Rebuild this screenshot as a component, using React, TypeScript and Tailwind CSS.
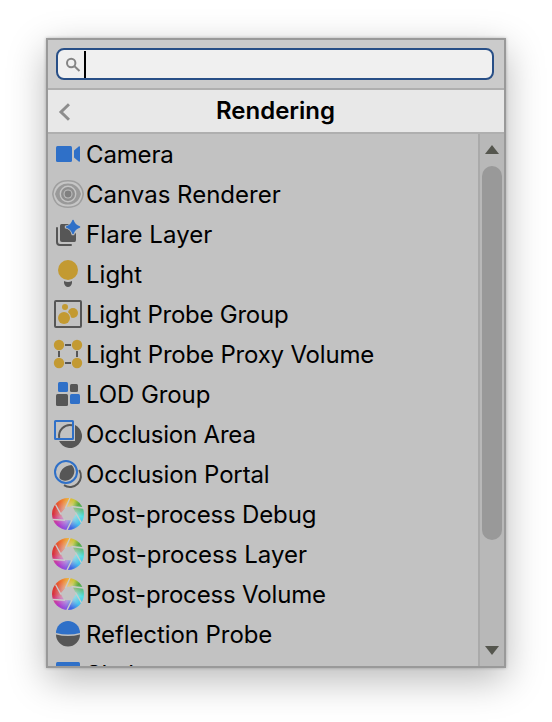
import type { ReactNode } from 'react';

const BLUE = '#2f70c8';
const GRAY = '#565656';
const GOLD = '#c39a32';

function Svg({ children }: { children: ReactNode }) {
  return (
    <svg viewBox="0 0 32 32" width="32" height="32" className="block shrink-0" fill="none">
      {children}
    </svg>
  );
}

const Camera = () => (
  <Svg>
    <rect x="4" y="8" width="16" height="16" rx="1.5" fill={BLUE} />
    <path d="M22 12.5 L27 8.2 Q28 8 28 9 V23 Q28 24 27 23.8 L22 19.5 Z" fill={BLUE} />
  </Svg>
);

const CanvasRenderer = () => (
  <Svg>
    <path d="M0.8 16 C2 7 8 2.8 16 2.8 C24 2.8 30 7 31.2 16 C30 25 24 29.2 16 29.2 C8 29.2 2 25 0.8 16 Z" fill="#c6c6c6" stroke="#9f9f9f" strokeWidth="1.6" />
    <path d="M3 16 C5 8.500 10 5.4 16 5.4 C22 5.4 27 8.500 29 16 C27 23.500 22 26.6 16 26.6 C10 26.6 5 23.500 3 16 Z" fill="#999999" />
    <circle cx="16" cy="16" r="8.4" fill="#c4c4c4" />
    <circle cx="16" cy="16" r="7" fill="#8e8e8e" />
    <circle cx="16" cy="16" r="4.5" fill="#bdbdbd" />
    <circle cx="16" cy="16" r="3.4" fill="#808080" />
  </Svg>
);

const FlareLayer = () => (
  <Svg>
    <path d="M5 10 V24 Q5 27 8 27 H19" stroke={GRAY} strokeWidth="2" strokeLinecap="round" />
    <path d="M9.5 6 H17 L24 16 V22 Q24 24 22.5 24 H10 Q8 24 8 22 V7.5 Q8 6 9.5 6 Z" fill={GRAY} />
    <path d="M21 1 Q22 8 29 9 Q22 10 21 17 Q20 10 13 9 Q20 8 21 1 Z" fill={BLUE} stroke="#c2c2c2" strokeWidth="2.5" />
    <path d="M21 2.5 Q22.5 7.5 27.5 9 Q22.5 10.5 21 15.5 Q19.5 10.5 14.5 9 Q19.5 7.5 21 2.5 Z" fill={BLUE} stroke={BLUE} strokeWidth="1.5" strokeLinejoin="round" />
  </Svg>
);

const Light = () => (
  <Svg>
    <circle cx="16" cy="12" r="10" fill={GOLD} />
    <path d="M12 23 Q16 25 20 23 V25 Q19 29 16 29 Q13 29 12 25 Z" fill={GRAY} />
  </Svg>
);

const LightProbeGroup = () => (
  <Svg>
    <rect x="3" y="3" width="26" height="26" rx="1" stroke={GRAY} strokeWidth="2" />
    <circle cx="21" cy="15" r="5" fill={GOLD} />
    <circle cx="12" cy="20" r="7" fill="#c2c2c2" />
    <circle cx="12" cy="20" r="6" fill={GOLD} />
    <circle cx="13" cy="9" r="3" fill={GOLD} />
  </Svg>
);

const LightProbeVolume = () => (
  <Svg>
    <path d="M13 7 H19 M13 25 H19 M7 13 V19 M25 13 V19" stroke={GRAY} strokeWidth="2" />
    <circle cx="7" cy="7" r="5.2" fill={GOLD} />
    <circle cx="25" cy="7" r="5.2" fill={GOLD} />
    <circle cx="7" cy="25" r="5.2" fill={GOLD} />
    <circle cx="25" cy="25" r="5.2" fill={GOLD} />
  </Svg>
);

const LodGroup = () => (
  <Svg>
    <rect x="6" y="4" width="10" height="10" rx="1.5" fill={BLUE} />
    <rect x="18" y="6" width="8" height="8" rx="1.5" fill={GRAY} />
    <rect x="4" y="16" width="12" height="12" rx="1.5" fill={GRAY} />
    <rect x="18" y="16" width="10" height="10" rx="1.5" fill={BLUE} />
  </Svg>
);

const OcclusionArea = () => (
  <Svg>
    <path d="M23 7.1 A12 12 0 1 1 7.1 23 H23 Z" fill={GRAY} />
    <path d="M7.2 20 A11 11 0 0 1 20 7.2" stroke={GRAY} strokeWidth="2" />
    <rect x="3" y="3" width="18" height="18" rx="0.5" stroke={BLUE} strokeWidth="2" />
  </Svg>
);

const OcclusionPortal = () => (
  <Svg>
    <path d="M27.2 12 A11 11 0 0 1 12 27.2" stroke={GRAY} strokeWidth="2" />
    <path d="M19.5 7 C24 11 22.5 17 19.5 20 C16 23.5 10 23.5 7.5 20 C7 13 12 7.5 19.5 7 Z" fill={GRAY} />
    <circle cx="14" cy="14" r="11" stroke={BLUE} strokeWidth="2" />
  </Svg>
);

const Aperture = () => (
  <div className="relative size-8 shrink-0">
    <div className="size-8 rounded-full bg-[conic-gradient(from_0deg,#eeb03c,#c7c83c_25deg,#57a73c_48deg,#5cc08a_75deg,#4fdfe4_100deg,#45c0ee_135deg,#3f62e4_168deg,#8d55de_190deg,#b338c8_220deg,#cf3f90_245deg,#d8343f_270deg,#dd4030_300deg,#ee7030_330deg,#eeb03c)]" />
    <svg viewBox="0 0 32 32" className="absolute inset-0 size-8">
      <defs>
        <radialGradient id="fade">
          <stop offset="45%" stopColor="#dedede" stopOpacity="0.5" />
          <stop offset="90%" stopColor="#dedede" stopOpacity="0" />
        </radialGradient>
      </defs>
      <circle cx="16" cy="16" r="16" fill="url(#fade)" />
      <path d="M14 9 L20.5 8.5 L24 15.5 L20 22.5 L12 22 L8.5 15.5 Z" fill="#c4c4c4" />
      <path d="M13.5 10 L18 0 M19.5 8.5 L31.5 10 M23.5 14.5 L29.5 25 M20 22 L15 32 M13 22.2 L1 21.5 M9 16.5 L3.5 6.5" stroke="#cbcbcb" strokeWidth="1.4" />
    </svg>
  </div>
);

const ReflectionProbe = () => (
  <Svg>
    <path d="M4 15 A12 12 0 0 1 28 15 Q16 18 4 15 Z" fill={BLUE} />
    <path d="M4 16.4 Q16 19.4 28 16.4 A12 12 0 0 1 4 16.4 Z" fill={GRAY} />
  </Svg>
);

const Skybox = () => (
  <Svg>
    <rect x="4" y="4" width="24" height="24" rx="1.5" fill={BLUE} />
  </Svg>
);

const items: [string, () => ReactNode, string][] = [
  ['Camera', Camera, 'tracking-[-0.15px]'],
  ['Canvas Renderer', CanvasRenderer, 'tracking-normal'],
  ['Flare Layer', FlareLayer, 'tracking-[0.08px]'],
  ['Light', Light, 'tracking-normal'],
  ['Light Probe Group', LightProbeGroup, 'tracking-[-0.24px]'],
  ['Light Probe Proxy Volume', LightProbeVolume, 'tracking-[-0.19px]'],
  ['LOD Group', LodGroup, 'tracking-[-0.1px]'],
  ['Occlusion Area', OcclusionArea, 'tracking-[-0.2px]'],
  ['Occlusion Portal', OcclusionPortal, 'tracking-[-0.15px]'],
  ['Post-process Debug', Aperture, 'tracking-[-0.16px]'],
  ['Post-process Layer', Aperture, 'tracking-normal'],
  ['Post-process Volume', Aperture, 'tracking-[-0.16px]'],
  ['Reflection Probe', ReflectionProbe, 'tracking-[-0.08px]'],
  ['Skybox', Skybox, 'tracking-normal'],
];

export default function App() {
  return (
    <div className="h-[722px] w-[552px] overflow-hidden bg-white pt-[38px] pl-[46px] font-[Inter,sans-serif] text-black">
      <div className="flex h-[630px] w-[460px] flex-col border-2 border-[#999999] bg-[#c2c2c2] shadow-[0_12px_36px_rgba(0,0,0,0.28),0_0_3px_rgba(0,0,0,0.25)]">
        <div className="flex h-[50px] shrink-0 border-b-2 border-[#afafaf] bg-[#cbcbcb] px-2 pt-2">
          <div className="flex h-8 w-[438px] items-center rounded-lg border-2 border-[#284f87] bg-[#f0f0f0] pl-2">
            <svg viewBox="0 0 16 16" width="16" height="16" fill="none" stroke="#858585" strokeWidth="2" className="mt-px">
              <circle cx="5.2" cy="6" r="4.2" />
              <path d="M8.5 9.2 L13.5 14" />
            </svg>
            <div className="ml-0.5 h-[27px] w-0.5 bg-black" />
          </div>
        </div>
        <div className="flex h-11 shrink-0 items-center border-b-2 border-[#afafaf] bg-[#e8e8e8] pl-2.5">
          <svg viewBox="0 0 12 18" width="12" height="18" fill="none" stroke="#8d8d8d" strokeWidth="3" className="mt-0.5 shrink-0">
            <path d="M11 1.2 L3 9 L11 16.8" />
          </svg>
          <h1 className="flex-1 pr-[23px] text-center text-[24px] leading-[42px] font-semibold">Rendering</h1>
        </div>
        <div className="flex min-h-0 flex-1">
          <ul className="flex-1 overflow-hidden bg-[#c2c2c2]">
            {items.map(([label, Icon, tracking]) => (
              <li key={label} className="flex h-10 items-center gap-0.5 pl-1">
                <Icon />
                <span className={`pt-0.5 text-[24px] leading-10 whitespace-nowrap ${tracking}`}>{label}</span>
              </li>
            ))}
          </ul>
          <div className="flex w-[26px] shrink-0 flex-col items-center border-l-2 border-[#aaaaaa] bg-[#b8b8b8] pt-[11px] pb-[11px]">
            <svg viewBox="0 0 14 9" width="14" height="9" className="shrink-0"><path d="M0 9 L7 0 L14 9 Z" fill="#55564e" /></svg>
            <div className="mt-3 h-[374px] w-5 rounded-full bg-[#999999]" />
            <svg viewBox="0 0 14 9" width="14" height="9" className="mt-auto shrink-0"><path d="M0 0 H14 L7 9 Z" fill="#55564e" /></svg>
          </div>
        </div>
      </div>
    </div>
  );
}
